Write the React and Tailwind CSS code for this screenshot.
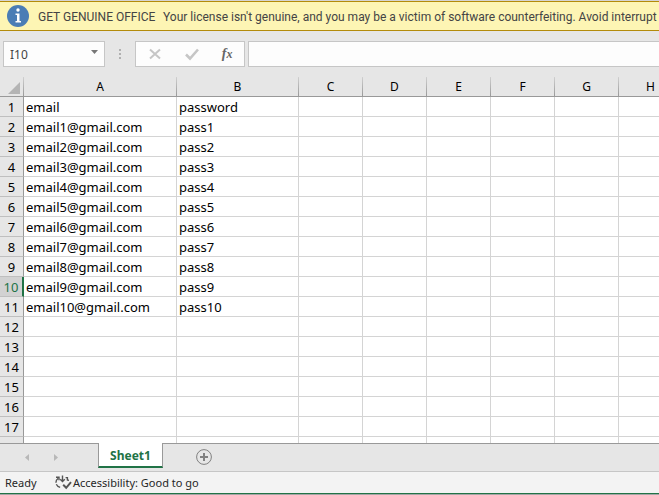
import React from "react";

const columns = ["A", "B", "C", "D", "E", "F", "G", "H"];
const records = [
  ["email", "password"],
  ["email1@gmail.com", "pass1"],
  ["email2@gmail.com", "pass2"],
  ["email3@gmail.com", "pass3"],
  ["email4@gmail.com", "pass4"],
  ["email5@gmail.com", "pass5"],
  ["email6@gmail.com", "pass6"],
  ["email7@gmail.com", "pass7"],
  ["email8@gmail.com", "pass8"],
  ["email9@gmail.com", "pass9"],
  ["email10@gmail.com", "pass10"],
];
const rowNumbers = Array.from({ length: 17 }, (_, i) => i + 1);
const activeRow = 10;

function LicenseBanner() {
  return (
    <div role="alert" className="flex h-[30px] items-center overflow-hidden whitespace-nowrap border-y border-[#b38b0b] bg-[#fdf5b4] pl-[7px] font-['Roboto','Noto_Sans',sans-serif] text-xs text-[#444444]">
      <svg className="size-[22px] shrink-0" viewBox="0 0 22 22" aria-hidden="true">
        <circle cx="11" cy="11" r="11" fill="#4a7db5" />
        <circle cx="11" cy="5" r="1.7" fill="#fff" />
        <path d="M8.5 8.5h4v7.5H14v1.5H8.5V16H10v-6H8.5z" fill="#fff" />
      </svg>
      <strong className="ml-[9px] w-[125px] shrink-0 pt-px font-normal">GET GENUINE OFFICE</strong>
      <span className="pt-px">Your license isn't genuine, and you may be a victim of software counterfeiting. Avoid interrupt</span>
    </div>
  );
}

function FormulaBar() {
  return (
    <div className="flex h-[46px] items-start pl-[3px] pt-[10px]">
      <div className="flex h-[26px] w-[102px] shrink-0 border border-[#c6c6c6] bg-[#fdfdfd]">
        <input aria-label="Name box" defaultValue="I10" className="w-0 grow bg-transparent pl-[6px] pt-px text-xs text-[#444444] outline-none" />
        <button aria-label="Show names" className="flex w-5 items-center justify-center pb-1">
          <svg className="h-1 w-[7px]" viewBox="0 0 7 4"><path d="M0 0h7L3.5 4z" fill="#777" /></svg>
        </button>
      </div>
      <svg className="mx-[14px] h-[26px] w-[2px] shrink-0" viewBox="0 0 2 26" aria-hidden="true">
        <path d="M0 8h2v2H0zM0 12h2v2H0zM0 16h2v2H0z" fill="#b0b0b0" />
      </svg>
      <div className="flex h-[26px] w-[110px] shrink-0 items-center justify-around border border-[#c6c6c6] bg-[#fdfdfd]">
        <button aria-label="Cancel" disabled>
          <svg className="size-[14px]" viewBox="0 0 14 14" fill="none" stroke="#c6c6c6" strokeWidth="2"><path d="M2 2.5l10 9M12 2.5l-10 9" /></svg>
        </button>
        <button aria-label="Enter" disabled>
          <svg className="size-[14px]" viewBox="0 0 14 14" fill="none" stroke="#c6c6c6" strokeWidth="2.6"><path d="M1 7.5l4 4L13 2.5" /></svg>
        </button>
        <button aria-label="Insert function" className="flex items-baseline font-['Liberation_Serif',serif] font-bold italic leading-4 text-[#666666]">
          <span className="text-sm leading-4">f</span>
          <span className="text-xs leading-4">x</span>
        </button>
      </div>
      <input aria-label="Formula bar" className="ml-[3px] h-[26px] min-w-0 grow border border-r-0 border-[#c6c6c6] bg-[#fdfdfd] px-2 text-xs outline-none" />
    </div>
  );
}

function Grid() {
  return (
    <div className="h-[366px] overflow-hidden bg-white">
      <table className="w-[683px] table-fixed border-separate border-spacing-0 text-[13px] leading-[18px] text-black">
        <colgroup>
          <col className="w-6" />
          <col className="w-[153px]" />
          <col className="w-[122px]" />
          {columns.slice(2).map((c) => <col key={c} className="w-16" />)}
        </colgroup>
        <thead>
          <tr className="h-5 bg-[#e6e6e6]">
            <th className="border-b border-[#999999] bg-[linear-gradient(to_bottom,#d0d0d0,#999999)] bg-[length:1px_100%] bg-right bg-no-repeat p-0">
              <button aria-label="Select all" className="ml-auto mr-1 mt-[3px] block">
                <svg className="block size-3" viewBox="0 0 12 12"><path d="M12 0v12H0z" fill="#b4b4b4" /></svg>
              </button>
            </th>
            {columns.map((c) => (
              <th key={c} scope="col" className="border-b border-[#999999] bg-[linear-gradient(to_bottom,#d0d0d0,#999999)] bg-[length:1px_100%] bg-right bg-no-repeat p-0 pr-px text-xs font-normal">{c}</th>
            ))}
          </tr>
        </thead>
        <tbody>
          {rowNumbers.map((n) => (
            <tr key={n} className="h-5">
              <th scope="row" className={n === activeRow ? "border-b border-r-2 border-b-[#bfbfbf] border-r-[#217346] bg-[#d2d2d2] p-0 font-normal text-[#217346]" : "border-b border-r border-b-[#bfbfbf] border-r-[#999999] bg-[#e6e6e6] p-0 font-normal"}>{n}</th>
              {columns.map((c, i) => (
                <td key={c} className="border-b border-r border-[#d4d4d4] p-0 pl-[2px]">{records[n - 1]?.[i]}</td>
              ))}
            </tr>
          ))}
          <tr className="h-5">
            <th className="border-r border-[#999999] bg-[#e6e6e6] p-0" />
            {columns.map((c) => <td key={c} className="border-r border-[#d4d4d4] p-0" />)}
          </tr>
        </tbody>
      </table>
    </div>
  );
}

function SheetTabs() {
  return (
    <div className="flex h-[29px] items-start border-b border-[#c6c6c6]">
      <div className="flex h-7 w-[98px] shrink-0 items-center border-t border-[#999999] pl-[25px]">
        <button aria-label="Previous sheet" disabled className="mr-[25px]">
          <svg className="h-[7px] w-1" viewBox="0 0 4 7"><path d="M4 0v7L0 3.5z" fill="#b8b8b8" /></svg>
        </button>
        <button aria-label="Next sheet" disabled>
          <svg className="h-[7px] w-1" viewBox="0 0 4 7"><path d="M0 0v7l4-3.5z" fill="#b8b8b8" /></svg>
        </button>
      </div>
      <button aria-current="page" className="h-[25px] w-[65px] shrink-0 border-x border-b-2 border-x-[#999999] border-b-[#217346] bg-white pt-[2px] text-xs font-bold text-[#217346]">Sheet1</button>
      <div className="h-7 grow border-t border-[#999999] pl-[33px] pt-[5px]">
        <button aria-label="New sheet" className="block">
          <svg className="block size-4" viewBox="0 0 16 16" fill="none" stroke="#808080">
            <circle cx="8" cy="8" r="7.4" />
            <path d="M8 4v8M4 8h8" strokeWidth="2" />
          </svg>
        </button>
      </div>
    </div>
  );
}

function StatusBar() {
  return (
    <div className="flex h-[22px] items-center border-b border-[#217346] bg-[#f3f3f3] pl-[5px] text-[11px] text-[#262626]">
      <span className="w-[50px] pt-[2px]">Ready</span>
      <button className="flex items-center">
        <svg className="h-[15px] w-[18px]" viewBox="0 0 18 15" fill="none" stroke="#555" strokeWidth="1.4">
          <path d="M3.2 3.2C-0.6 6 0.2 11.6 6.6 12.8" strokeDasharray="5.2 1.6" />
          <path d="M1 2.3h3v3" />
          <path d="M7.5 0.6v5.6M5.2 4.3l2.3 2.2 2.3-2.2M10.6 2.6h1.8v3M13.2 4.6v1.4" />
          <path d="M8.2 9.8l3 3L16 7.2" strokeWidth="2" />
        </svg>
        <span className="pt-[2px]">Accessibility: Good to go</span>
      </button>
    </div>
  );
}

export default function App() {
  return (
    <main className="w-full overflow-hidden border-t border-[#d4d4d4] bg-[#e6e6e6] font-['Noto_Sans','Open_Sans',sans-serif]">
      <LicenseBanner />
      <FormulaBar />
      <Grid />
      <SheetTabs />
      <StatusBar />
      <div className="h-px bg-[#a6a6a6]" />
    </main>
  );
}
